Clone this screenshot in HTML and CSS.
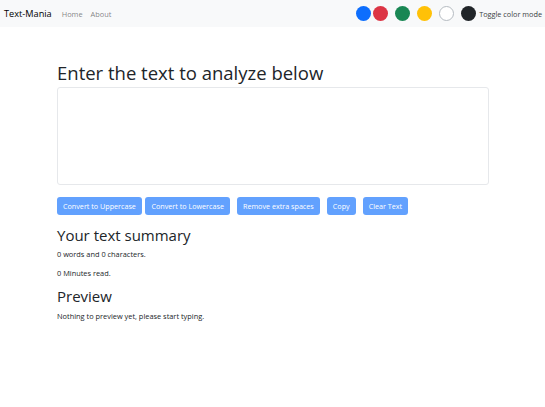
FILE: index.html
```html
<!DOCTYPE html>
<html lang="en">
<head>
<meta charset="utf-8">
<title>Text-Mania</title>
<link rel="stylesheet" href="styles.css">
</head>
<body>
<nav class="navbar">
  <div class="nav-left">
    <span class="brand">Text-Mania</span>
    <span class="nav-link">Home</span>
    <span class="nav-link">About</span>
  </div>
  <div class="nav-right">
    <span class="dot dot-blue"></span>
    <span class="dot dot-red"></span>
    <span class="dot dot-green"></span>
    <span class="dot dot-yellow"></span>
    <span class="dot dot-white"></span>
    <span class="dot dot-dark"></span>
    <span class="toggle-label">Toggle color mode</span>
  </div>
</nav>
<main class="container">
  <h1 class="title">Enter the text to analyze below</h1>
  <textarea class="text-box"></textarea>
  <div class="btn-row">
    <button class="btn first">Convert to Uppercase</button>
    <button class="btn">Convert to Lowercase</button>
    <button class="btn">Remove extra spaces</button>
    <button class="btn">Copy</button>
    <button class="btn">Clear Text</button>
  </div>
  <h2 class="subtitle">Your text summary</h2>
  <p class="info">0 words and 0 characters.</p>
  <p class="info">0 Minutes read.</p>
  <h2 class="subtitle preview">Preview</h2>
  <p class="info">Nothing to preview yet, please start typing.</p>
</main>
</body>
</html>
```
FILE: styles.css
```css
* { box-sizing: border-box; }
body {
  margin: 0;
  font-family: "Open Sans", "Noto Sans", sans-serif;
  color: #212529;
  background: #fff;
}
.navbar {
  height: 27px;
  background: #f8f9fa;
  display: flex;
  align-items: center;
  justify-content: space-between;
  padding: 0 3px 0 4px;
}
.nav-left { display: flex; align-items: center; }
.brand { font-size: 9.2px; color: #000; margin-right: 10px; }
.nav-link { font-size: 7.4px; color: rgba(0,0,0,0.5); margin-right: 8px; }
.nav-right { display: flex; align-items: center; gap: 7px; }
.dot {
  width: 15px; height: 15px; border-radius: 50%; display: block;
}
.dot-blue { background: #0d6efd; margin-right: -4.5px; }
.dot-red { background: #dc3545; }
.dot-green { background: #198754; margin-right: -0.7px; }
.dot-yellow { background: #ffc107; }
.dot-white { background: #fff; border: 1px solid #b5bbc1; }
.dot-dark { background: #212529; margin-right: -3.5px; }
.toggle-label { font-size: 7.3px; color: #3a3f44; }
.container {
  width: 432px;
  margin-left: 57px;
}
.title {
  font-size: 18.5px;
  font-weight: 500;
  line-height: 22px;
  margin: 35px 0 3px;
}
.text-box {
  display: block;
  width: 432px;
  height: 98px;
  border: 1px solid #e6e8eb;
  border-radius: 3px;
  resize: none;
  margin: 0;
}
.btn-row { display: flex; gap: 7px; margin-top: 12px; }
.btn {
  height: 18px;
  border: none;
  border-radius: 3px;
  background: #62a1fe;
  color: #fff;
  font-family: inherit;
  font-size: 7.2px;
  padding: 0 6px;
}
.btn.first { margin-right: -3.5px; }
.subtitle {
  font-size: 15px;
  font-weight: 500;
  line-height: 18px;
  margin: 11px 0 5px;
}
.preview { margin-top: 4px; margin-bottom: 6px; }
.info {
  font-size: 7.4px;
  line-height: 11px;
  margin: 0 0 8px;
}
```
